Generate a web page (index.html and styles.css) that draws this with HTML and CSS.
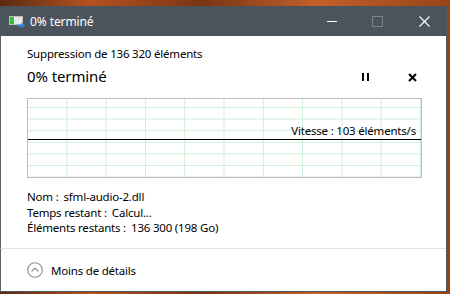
FILE: index.html
```html
<!DOCTYPE html>
<html lang="fr">
<head>
    <meta charset="UTF-8">
    <title>0% terminé</title>
    <link rel="stylesheet" href="styles.css">
</head>
<body>
    <div class="window">
        <div class="titlebar">
            <svg class="app-icon" width="17" height="12" viewBox="0 0 17 12">
                <rect x="0.5" y="0.5" width="13" height="8" fill="#e8e8e8" stroke="#bdbdbd"/>
                <rect x="1" y="1" width="4" height="7" fill="#3cba3c"/>
                <path d="M8 8.5h4.5V6.5l3.5 3-3.5 3v-2H8z" fill="#2d8be0"/>
            </svg>
            <span class="title">0% terminé</span>
            <div class="controls">
                <span class="ctl minimize"></span>
                <span class="ctl maximize"></span>
                <svg class="ctl close" width="11" height="11" viewBox="0 0 11 11">
                    <path d="M0.5 0.5l10 10M10.5 0.5l-10 10" stroke="#fff" stroke-width="1.1"/>
                </svg>
            </div>
        </div>

        <div class="content">
            <p class="subtitle">Suppression de 136 320 éléments</p>
            <div class="progress-head">
                <h1>0% terminé</h1>
                <div class="actions">
                    <span class="pause"><i></i><i></i></span>
                    <svg class="cancel" width="9" height="9" viewBox="0 0 9 9">
                        <path d="M1 1l7 7M8 1l-7 7" stroke="#000" stroke-width="2"/>
                    </svg>
                </div>
            </div>

            <div class="graph">
                <div class="speed-line"></div>
                <span class="speed">Vitesse : 103 éléments/s</span>
            </div>

            <div class="details">
                <p><span class="label">Nom :</span>sfml-audio-2.dll</p>
                <p><span class="label">Temps restant :</span>Calcul...</p>
                <p><span class="label">Éléments restants :</span>136 300 (198 Go)</p>
            </div>
        </div>

        <div class="footer">
            <svg class="toggle" width="16" height="16" viewBox="0 0 16 16">
                <circle cx="8" cy="8" r="7.3" fill="none" stroke="#8c8c8c" stroke-width="1.1"/>
                <path d="M4.5 9.5L8 6l3.5 3.5" fill="none" stroke="#8c8c8c" stroke-width="1.1"/>
            </svg>
            <span>Moins de détails</span>
        </div>
    </div>
</body>
</html>
```

FILE: styles.css
```css
body {
    margin: 0;
    padding: 0;
    width: 450px;
    height: 294px;
    overflow: hidden;
    font-family: 'Noto Sans', sans-serif;
    font-size: 11.5px;
    letter-spacing: -0.2px;
    color: #000;
    background: linear-gradient(90deg, #5a2a12 0%, #b5521f 20%, #7a3414 45%, #c2602a 70%, #9a4418 100%);
}
.window {
    margin-top: 6px;
    width: 446px;
    height: 285px;
    border-right: 1px solid #4b545c;
    border-bottom: 1px solid #4b545c;
    background: #fff;
    display: flex;
    flex-direction: column;
}
.titlebar {
    height: 30px;
    background: #4b545c;
    display: flex;
    align-items: center;
    color: #fff;
    flex-shrink: 0;
}
.app-icon {
    margin-left: 9px;
    margin-top: 2px;
}
.title {
    margin-left: 4px;
    font-size: 12px;
    letter-spacing: -0.1px;
}
.controls {
    margin-left: auto;
    display: flex;
    align-items: center;
}
.ctl {
    display: block;
}
.minimize {
    width: 10px;
    height: 1px;
    background: #fff;
    margin-right: 35px;
}
.maximize {
    width: 9px;
    height: 9px;
    border: 1px solid #7d858b;
    margin-right: 36px;
}
.close {
    margin-right: 16px;
}
.content {
    border-left: 1px solid #5c646b;
    padding: 10px 25px 0 26px;
    flex: 1;
}
.subtitle {
    margin: 0;
    line-height: 16px;
}
.progress-head {
    display: flex;
    align-items: center;
    height: 22px;
    margin-top: 3px;
}
.progress-head h1 {
    margin: 0;
    font-size: 15px;
    font-weight: normal;
    letter-spacing: -0.1px;
}
.actions {
    margin-left: auto;
    display: flex;
    align-items: center;
    padding-top: 2px;
}
.pause {
    display: flex;
    gap: 3px;
    margin-right: 39px;
}
.pause i {
    display: block;
    width: 2px;
    height: 8px;
    background: #000;
}
.cancel {
    margin-right: 4px;
}
.graph {
    position: relative;
    margin-top: 11px;
    width: 393px;
    height: 78px;
    border: 1px solid #bcbcbc;
    background:
        linear-gradient(to right, transparent 38.3px, #cdeed6 38.3px) 0 0 / 39.3px 100%,
        linear-gradient(to bottom, #cdeed6 1px, transparent 1px) 0 8px / 100% 11.6px;
}
.speed-line {
    position: absolute;
    left: 0;
    right: 0;
    top: 40px;
    height: 1px;
    background: #000;
}
.speed {
    position: absolute;
    right: 5px;
    top: 24px;
    line-height: 16px;
}
.details {
    margin-top: 11px;
}
.details p {
    margin: 0;
    line-height: 15.5px;
}
.label {
    margin-right: 5px;
}
.footer {
    height: 42px;
    border-top: 1px solid #e3e3e3;
    border-left: 1px solid #5c646b;
    display: flex;
    align-items: center;
    padding-left: 26px;
    flex-shrink: 0;
}
.toggle {
    margin-right: 8px;
}
```
